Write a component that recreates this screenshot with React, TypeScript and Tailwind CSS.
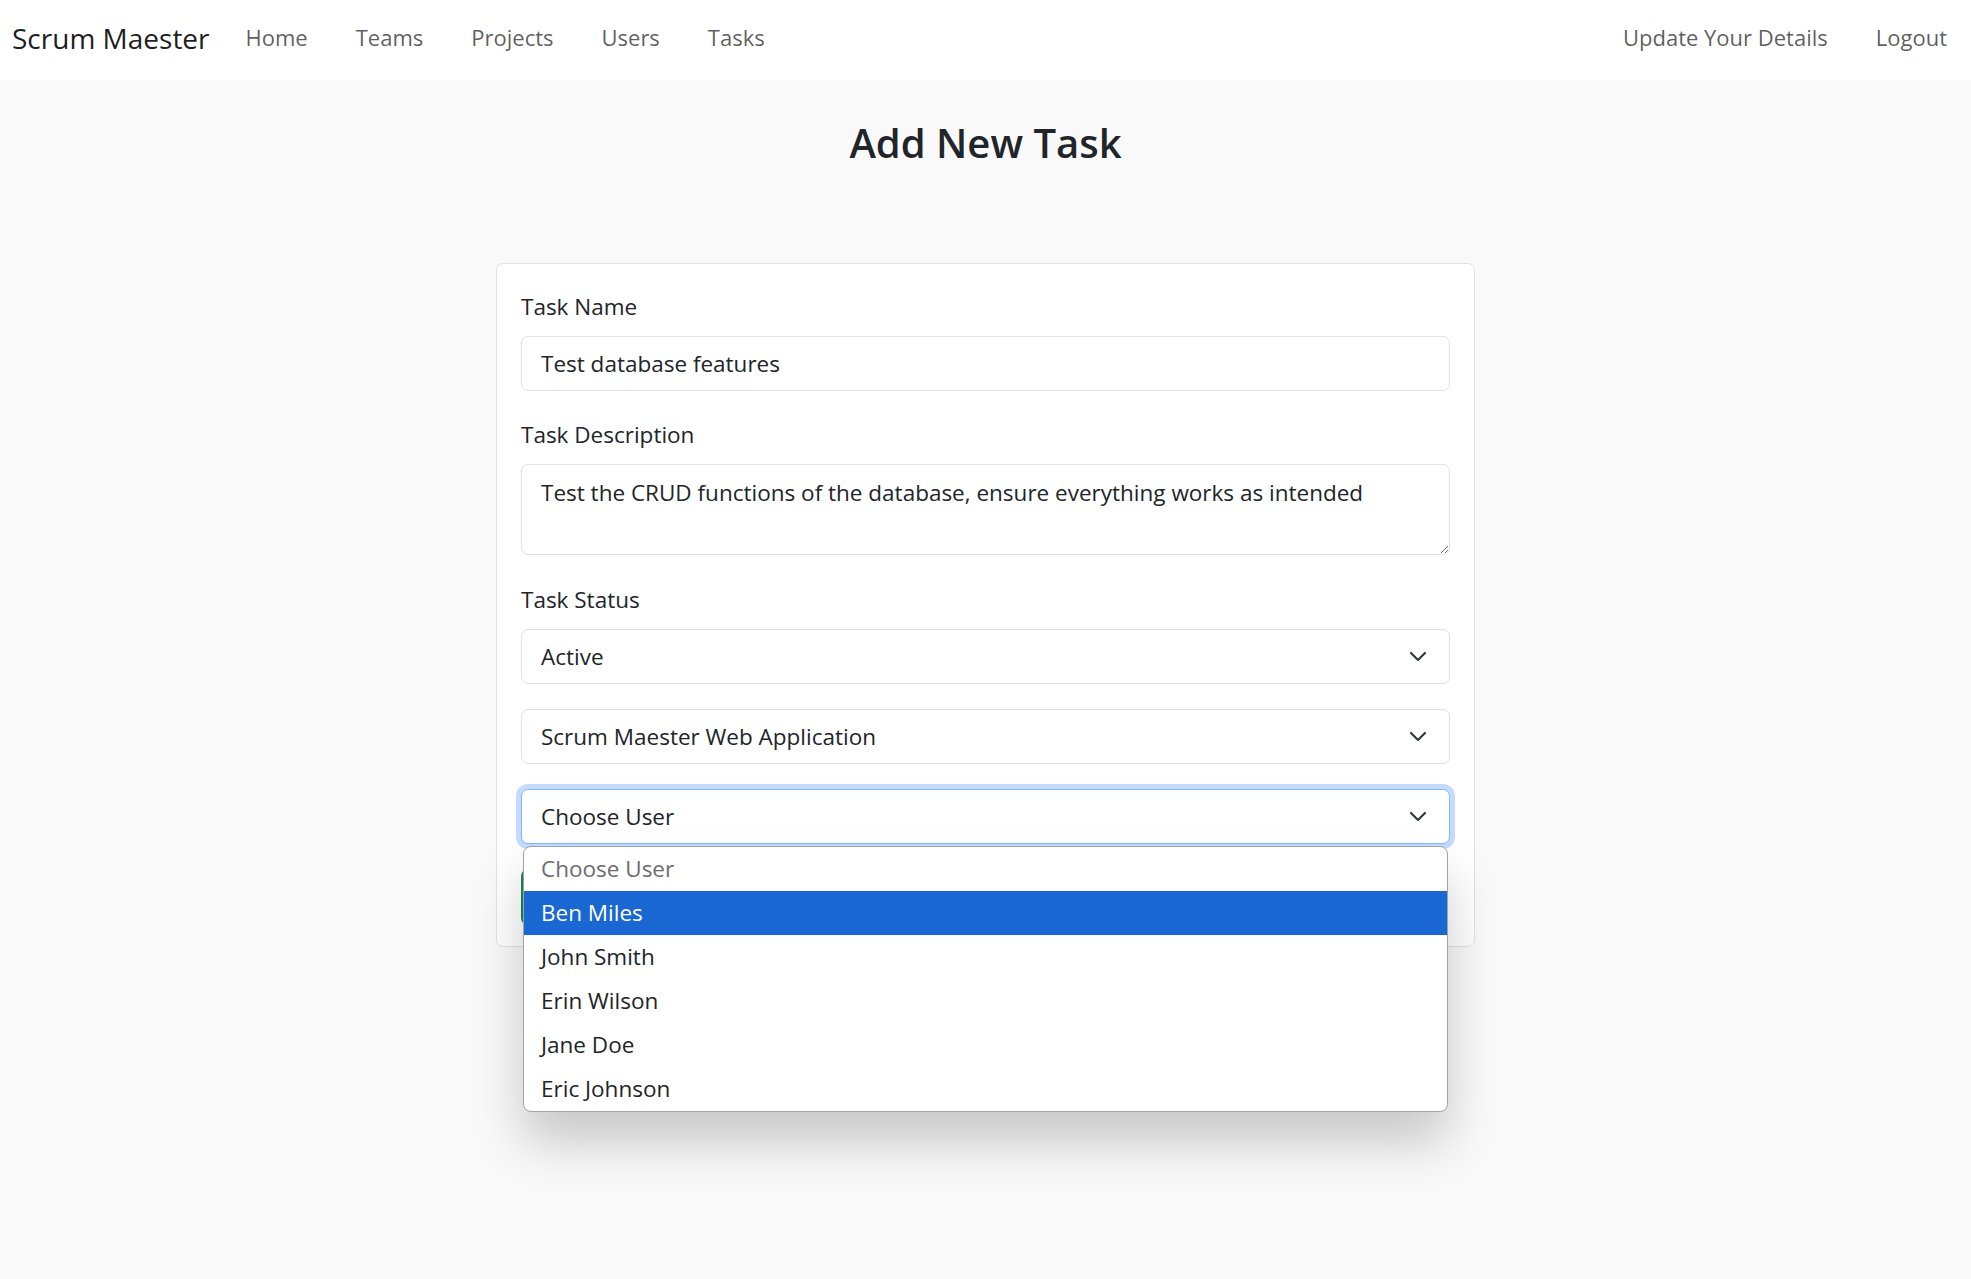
const users = ["Ben Miles", "John Smith", "Erin Wilson", "Jane Doe", "Eric Johnson"];

const font = { fontFamily: '"Open Sans", "Noto Sans", sans-serif' };

function Chevron() {
  return (
    <svg width="18" height="11" viewBox="0 0 18 11" className="shrink-0">
      <path d="M2 2l7 7 7-7" fill="none" stroke="#343a40" strokeWidth="2.2" strokeLinecap="round" strokeLinejoin="round" />
    </svg>
  );
}

function FakeSelect({ value, focused }: { value: string; focused?: boolean }) {
  return (
    <div
      className={
        focused
          ? "flex h-[55px] items-center justify-between rounded-[7px] border border-[#86b7fe] bg-white pl-[19px] pr-[22px] text-[22.5px] text-[#212529] shadow-[0_0_0_5px_rgba(13,110,253,0.25)]"
          : "flex h-[55px] items-center justify-between rounded-[7px] border border-[#dee2e6] bg-white pl-[19px] pr-[22px] text-[22.5px] text-[#212529]"
      }
    >
      <span>{value}</span>
      <Chevron />
    </div>
  );
}

export default function App() {
  return (
    <div className="min-h-[1279px] bg-[#f9f9f9] text-[#212529]" style={font}>
      <nav className="flex h-[80px] items-center bg-white pb-[5px] pl-[12px]">
        <span className="mr-[12px] text-[28px] text-black/90">Scrum Maester</span>
        <div className="flex text-[22px] text-black/65">
          <a className="px-[24px]">Home</a>
          <a className="px-[24px]">Teams</a>
          <a className="px-[24px]">Projects</a>
          <a className="px-[24px]">Users</a>
          <a className="px-[24px]">Tasks</a>
        </div>
        <div className="ml-auto flex text-[22px] text-black/65">
          <a className="px-[24px]">Update Your Details</a>
          <a className="px-[24px]">Logout</a>
        </div>
      </nav>

      <h2 className="mt-[39px] text-center text-[40px] font-semibold leading-[48px]">Add New Task</h2>

      <div className="mx-auto mt-[96px] w-[979px] rounded-[7px] border border-[#dee2e6] bg-white px-[24px] pb-[21px] pt-[28px] text-[22.5px]">
        <label className="block leading-[30px]">Task Name</label>
        <input
          readOnly
          defaultValue="Test database features"
          className="mt-[14px] block h-[55px] w-full rounded-[7px] border border-[#dee2e6] px-[19px] text-[22.5px] outline-none"
        />

        <label className="mt-[29px] block leading-[30px]">Task Description</label>
        <textarea
          readOnly
          defaultValue="Test the CRUD functions of the database, ensure everything works as intended"
          className="mt-[14px] block h-[91px] w-full rounded-[7px] border border-[#dee2e6] px-[19px] py-[13px] text-[22.5px] leading-[30px] outline-none"
        />

        <label className="mt-[30px] block leading-[30px]">Task Status</label>
        <div className="mt-[14px]">
          <FakeSelect value="Active" />
        </div>
        <div className="mt-[25px]">
          <FakeSelect value="Scrum Maester Web Application" />
        </div>
        <div className="relative mt-[25px]">
          <FakeSelect value="Choose User" focused />
          <ul className="absolute left-[2px] right-[2px] top-[calc(100%+2px)] z-10 overflow-hidden rounded-[8px] border border-[#a3a3a3] bg-white text-[22.5px] shadow-[0_30px_50px_rgba(0,0,0,0.2)]">
            <li className="flex h-[44px] items-center pl-[17px] text-[#6d6d6d]">Choose User</li>
            {users.map((u, i) => (
              <li
                key={u}
                className={
                  i === 0
                    ? "flex h-[44px] items-center bg-[#1967d2] pl-[17px] text-white"
                    : "flex h-[44px] items-center pl-[17px] text-[#212529]"
                }
              >
                {u}
              </li>
            ))}
          </ul>
        </div>

        {/* submit button, hidden behind the open list */}
        <button aria-label="Add Task" className="mt-[25px] block h-[56px] w-[160px] rounded-[7px] bg-[#198754]" />
      </div>
    </div>
  );
}
